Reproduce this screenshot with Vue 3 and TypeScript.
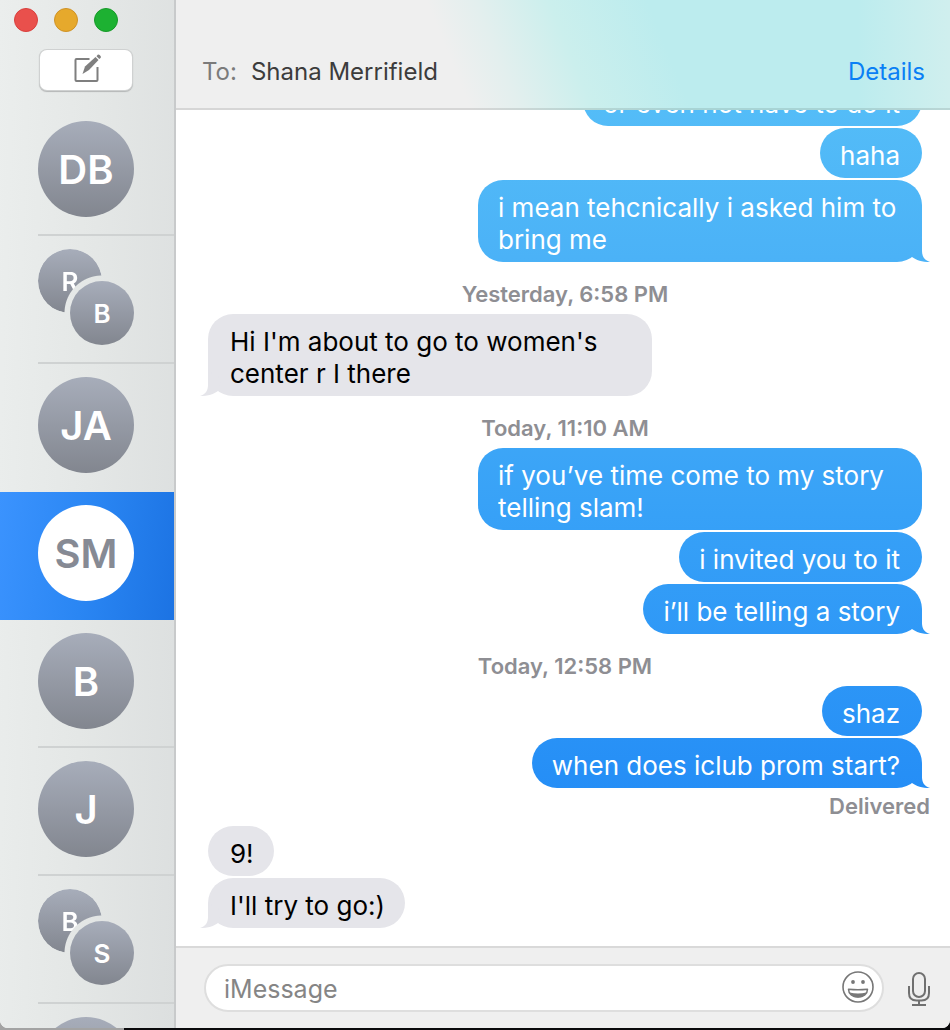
<script setup lang="ts">
import { ref } from 'vue'

interface Conversation {
  id: number
  initials: string[]
}

interface Entry {
  kind: 'sent' | 'received' | 'time' | 'status'
  text: string
  tail?: boolean
}

const conversations: Conversation[] = [
  { id: 1, initials: ['DB'] },
  { id: 2, initials: ['R', 'B'] },
  { id: 3, initials: ['JA'] },
  { id: 4, initials: ['SM'] },
  { id: 5, initials: ['B'] },
  { id: 6, initials: ['J'] },
  { id: 7, initials: ['B', 'S'] },
  { id: 8, initials: [''] },
]

const entries: Entry[] = [
  { kind: 'sent', text: 'or even not have to do it' },
  { kind: 'sent', text: 'haha' },
  { kind: 'sent', text: 'i mean tehcnically i asked him to bring me', tail: true },
  { kind: 'time', text: 'Yesterday, 6:58 PM' },
  { kind: 'received', text: "Hi I'm about to go to women's center r I there", tail: true },
  { kind: 'time', text: 'Today, 11:10 AM' },
  { kind: 'sent', text: 'if you’ve time come to my story telling slam!' },
  { kind: 'sent', text: 'i invited you to it' },
  { kind: 'sent', text: 'i’ll be telling a story', tail: true },
  { kind: 'time', text: 'Today, 12:58 PM' },
  { kind: 'sent', text: 'shaz' },
  { kind: 'sent', text: 'when does iclub prom start?', tail: true },
  { kind: 'status', text: 'Delivered' },
  { kind: 'received', text: '9!' },
  { kind: 'received', text: "I'll try to go:)", tail: true },
]

const selected = ref(4)
const draft = ref('')
</script>

<template>
  <div class="desktop">
    <div class="window">
      <aside class="sidebar">
        <div class="lights">
          <button class="light red" type="button" aria-label="Close"></button>
          <button class="light yellow" type="button" aria-label="Minimize"></button>
          <button class="light green" type="button" aria-label="Zoom"></button>
        </div>
        <button class="compose" type="button" aria-label="New message">
          <svg width="30" height="30" viewBox="0 0 30 30" fill="none">
            <path d="M18.500 6H5.500a1 1 0 0 0-1 1v20a1 1 0 0 0 1 1h20a1 1 0 0 0 1-1V14" stroke="#7f7f7f" stroke-width="2" />
            <path d="M11.500 21l2.500-7.500L24.500 4l3 3L18 17z" fill="#7f7f7f" />
            <path d="M25.500 3.200l1.200-1.400q1-.6 2 .3l.8.9q.8 1 0 2L28.300 6z" fill="#7f7f7f" />
          </svg>
        </button>
        <nav class="list" aria-label="Conversations">
          <button
            v-for="c in conversations"
            :key="c.id"
            type="button"
            class="cell"
            :class="{ selected: c.id === selected, before: c.id === selected - 1 }"
            @click="selected = c.id"
          >
            <span v-if="c.initials.length === 1" class="avatar">{{ c.initials[0] }}</span>
            <span v-else class="pair">
              <span class="avatar small back">{{ c.initials[0] }}</span>
              <span class="avatar small front">{{ c.initials[1] }}</span>
            </span>
          </button>
        </nav>
      </aside>

      <main class="main">
        <header class="header">
          <span class="to">To:</span>
          <h1 class="name">Shana Merrifield</h1>
          <a class="details" href="#">Details</a>
        </header>

        <section class="chat" aria-label="Messages">
          <div v-for="(e, i) in entries" :key="i" class="entry" :class="[e.kind, { tail: e.tail }]">
            <p class="text">{{ e.text }}</p>
          </div>
        </section>

        <form class="bar" @submit.prevent>
          <div class="field">
            <input v-model="draft" class="input" type="text" placeholder="iMessage" aria-label="iMessage" />
            <button class="icon" type="button" aria-label="Emoji">
              <svg width="32" height="32" viewBox="0 0 32 32" fill="none">
                <circle cx="16" cy="16" r="15" stroke="#777" stroke-width="1.600" />
                <circle cx="11" cy="11" r="1.900" fill="#777" />
                <circle cx="21" cy="11" r="1.900" fill="#777" />
                <path d="M6.500 18.300Q16 19.300 25.500 18.300C25.500 23 21.500 26 16 26S6.500 23 6.500 18.300Z" stroke="#777" stroke-width="1.500" stroke-linejoin="round" />
                <path d="M7.500 21.500Q16 23.500 24.500 21.500Q22 26.500 16 26.500T7.500 21.500Z" fill="#777" />
              </svg>
            </button>
          </div>
          <button class="icon" type="button" aria-label="Record audio">
            <svg width="24" height="36" viewBox="0 0 24 36" fill="none" stroke="#707070" stroke-width="2">
              <rect x="6" y="3" width="12" height="24" rx="6" />
              <path d="M2 16v7Q2 30.500 9.500 30.500h5q7.500 0 7.500-7.500V16M12 31v4M5 35h14" />
            </svg>
          </button>
        </form>
      </main>
    </div>
  </div>
</template>

<style>
body {
  margin: 0;
}
</style>

<style scoped>
.desktop {
  box-sizing: border-box;
  height: 100vh;
  padding-bottom: 2px;
  background: linear-gradient(90deg, #a3a3a3 124px, #0a0a0c 124px);
  font-family: Inter, "Liberation Sans", sans-serif;
}
.window {
  display: flex;
  height: 100%;
  overflow: hidden;
  border-radius: 0 0 8px 8px;
  background: #fff;
}
button {
  margin: 0;
  padding: 0;
  border: 0;
  background: none;
  font: inherit;
}
.sidebar {
  display: flex;
  flex: none;
  flex-direction: column;
  width: 174px;
  border-right: 2px solid #c8cacb;
  background: linear-gradient(92deg, #ebeeed, #e4e7e6 50%, #dcdfdf);
}
.lights {
  display: flex;
  gap: 16px;
  padding: 8px 14px 0;
}
.light {
  box-sizing: border-box;
  width: 24px;
  height: 24px;
  border: 1px solid #d93f3d;
  border-radius: 50%;
  background: #e9504c;
}
.yellow {
  border-color: #cf9226;
  background: #e6a92c;
}
.green {
  border-color: #169a28;
  background: #1db132;
}
.compose {
  display: flex;
  align-items: center;
  justify-content: center;
  flex: none;
  width: 92px;
  height: 40px;
  margin: 18px 0 18px 40px;
  border-radius: 7px;
  background: #fff;
  box-shadow: 0 0 0 1px #cfd1d1, 0 1px 1px 1px #b4b6b6;
}
.compose svg {
  margin-bottom: 4px;
}
.list {
  display: flex;
  flex: 1;
  flex-direction: column;
  min-height: 0;
  overflow: hidden;
}
.cell {
  display: flex;
  flex: none;
  align-items: flex-start;
  height: 128px;
  padding: 13px 0 0 38px;
  background: linear-gradient(#cfd2d2, #cfd2d2) 38px 100% / 100% 2px no-repeat;
}
.cell.before {
  background: none;
}
.cell.selected {
  background: linear-gradient(98deg, #3b93fe, #2a86f3 50%, #1c73e3);
}
.avatar {
  display: flex;
  align-items: center;
  justify-content: center;
  box-sizing: border-box;
  width: 96px;
  height: 96px;
  padding-top: 2px;
  border-radius: 50%;
  background: linear-gradient(#a7adba, #82868f);
  color: #fff;
  font-size: 40px;
  font-weight: 600;
  line-height: 48px;
}
.selected .avatar {
  background: #fff;
  color: #868a94;
}
.pair {
  display: grid;
  grid-template-columns: 32px 32px 32px;
  grid-template-rows: 32px 32px 32px;
}
.small {
  width: 64px;
  height: 64px;
  font-size: 26px;
  line-height: 32px;
}
.back {
  grid-area: 1 / 1 / 3 / 3;
  mask-image: radial-gradient(circle at 64px 64px, transparent 37px, #000 38px);
}
.front {
  grid-area: 2 / 2 / 4 / 4;
}
.main {
  display: flex;
  flex: 1;
  flex-direction: column;
  min-width: 0;
}
.header {
  display: flex;
  flex: none;
  align-items: flex-end;
  box-sizing: border-box;
  height: 110px;
  padding: 0 25px 20px 26px;
  border-bottom: 2px solid rgba(0, 0, 0, 0.1);
  background:
    linear-gradient(90deg, rgba(210, 239, 238, 0) 88%, #d0efee) border-box,
    linear-gradient(68deg, #efefef 36%, #e3efee 42%, #cbefed 51%, #bcecee 63%) border-box;
  font-size: 24px;
  line-height: 32px;
}
.to {
  color: #7b7b7b;
}
.name {
  margin: 0 0 0 14px;
  color: #3c3c3c;
  font-size: 24px;
  font-weight: 400;
}
.details {
  margin-left: auto;
  color: #0a7ff5;
  text-decoration: none;
}
.chat {
  display: flex;
  flex: 1;
  flex-direction: column;
  justify-content: flex-end;
  gap: 2px;
  min-height: 0;
  padding: 0 20px 18px 24px;
  overflow: hidden;
}
.entry {
  display: flex;
  flex: none;
}
.text {
  margin: 0;
}
.sent {
  justify-content: flex-end;
}
.sent .text,
.received .text {
  position: relative;
  box-sizing: border-box;
  max-width: 444px;
  margin: 0 8px;
  padding: 12px 22px 6px 20px;
  border-radius: 25px;
  font-size: 26px;
  line-height: 32px;
}
.received .text {
  padding: 12px 20px 6px 22px;
  background: #e5e5ea;
  color: #000;
}
.sent .text {
  background: linear-gradient(#5ac4f8, #4bb2f7 25%, #37a1f7 50%, #248df6 78%) fixed;
  color: #fff;
}
.tail .text::after {
  content: "";
  position: absolute;
  right: -8px;
  bottom: 0;
  width: 30px;
  height: 25px;
  background: inherit;
  clip-path: path("M22 0V14C22 19 24 23 30 25C22 25 16 23 12 20L8 8Z");
}
.received.tail .text::after {
  right: auto;
  left: -8px;
  clip-path: path("M8 0V14C8 19 6 23 0 25C8 25 14 23 18 20L22 8Z");
}
.time,
.status {
  color: #8e8e93;
  font-size: 22px;
  font-weight: 600;
  line-height: 28px;
}
.time {
  justify-content: center;
  padding: 16px 0 4px;
}
.status {
  justify-content: flex-end;
  padding: 2px 0 4px;
}
.bar {
  display: flex;
  flex: none;
  align-items: center;
  gap: 23px;
  padding: 16px 19px 16px 28px;
  border-top: 2px solid #d9d9d9;
  background: #efefef;
}
.field {
  display: flex;
  flex: 1;
  align-items: center;
  box-sizing: border-box;
  height: 48px;
  padding: 0 8px 2px 18px;
  border: 2px solid #dedede;
  border-radius: 24px;
  background: #fff;
}
.input {
  flex: 1;
  min-width: 0;
  padding: 3px 0 0;
  border: 0;
  outline: 0;
  background: none;
  color: #000;
  font: 25px/32px Inter, "Liberation Sans", sans-serif;
}
.input::placeholder {
  color: #858585;
  opacity: 1;
}
.icon {
  display: flex;
}
</style>
